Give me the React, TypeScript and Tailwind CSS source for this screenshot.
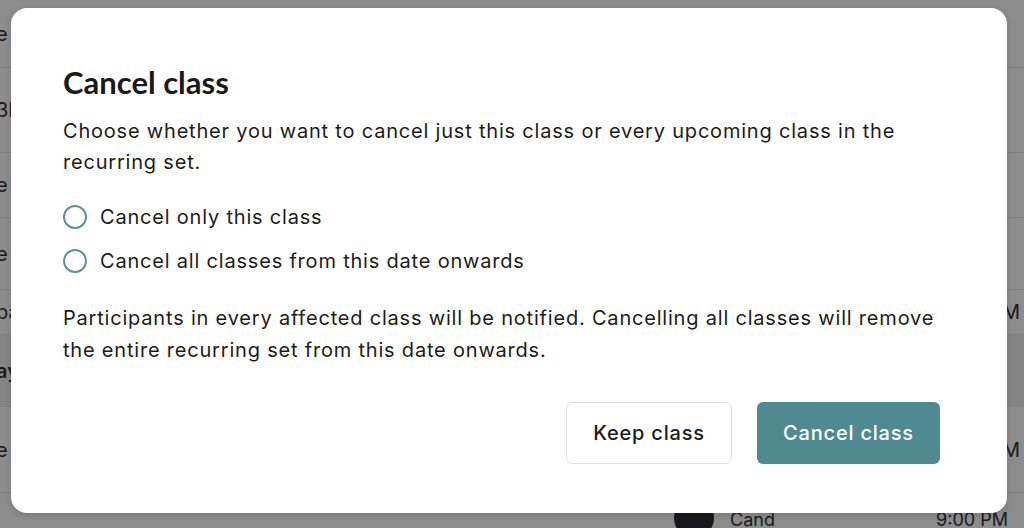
import { useState } from "react";

const rows = [
  { h: "h-[68px]", left: "e", right: "", band: false },
  { h: "h-[85px]", left: "3M", right: "", band: false },
  { h: "h-[65px]", left: "e", right: "", band: false },
  { h: "h-[72px]", left: "e", right: "", band: false },
  { h: "h-[45px]", left: "pa", right: "M", band: false },
  { h: "h-[72px]", left: "ay", right: "", band: true },
  { h: "h-[86px]", left: "e", right: "M", band: false },
];

export default function App() {
  const [choice, setChoice] = useState<string | null>(null);

  return (
    <div className="relative h-[528px] w-[1024px] overflow-hidden bg-white font-['Inter',sans-serif] text-[#1c1c1c]">
      {/* Page behind the dialog */}
      <div className="flex flex-col">
        {rows.map((r, i) => (
          <div
            key={i}
            className={`${r.h} flex items-center justify-between border-b border-[#e8e8e8] text-[20px] ${r.band ? "bg-[#f2f2f2] font-semibold" : ""}`}
          >
            <span className="-ml-[4px] text-[#333]">{r.left}</span>
            <span className="mr-[4px] text-[#333]">{r.right}</span>
          </div>
        ))}
        <div className="flex h-[40px] items-start pl-[674px] pt-[5px]">
          <div className="h-[40px] w-[40px] rounded-full bg-[#2d2d33]" />
          <span className="ml-4 mt-2 text-[18px] text-[#333]">Cand</span>
          <span className="ml-auto mr-4 mt-2 text-[18px] text-[#333]">9:00 PM</span>
        </div>
      </div>

      {/* Overlay */}
      <div className="absolute inset-0 bg-black/45" />

      {/* Dialog */}
      <div className="absolute left-[11px] top-[8px] flex h-[505px] w-[996px] flex-col rounded-[16px] bg-white pl-[52px] pr-[67px] pt-[62px] tracking-[0.8px] shadow-[0_2px_6px_rgba(0,0,0,0.15)]">
        <h2 className="font-['Lato',sans-serif] text-[31px] font-bold leading-[24px] tracking-[0px] text-[#1a1a1a]">
          Cancel class
        </h2>
        <p className="mt-[22px] text-[20px] leading-[31px]">
          Choose whether you want to cancel just this class or every upcoming class in the recurring set.
        </p>

        <div className="mt-[26px] flex flex-col gap-[18px]">
          {[
            { id: "one", label: "Cancel only this class" },
            { id: "all", label: "Cancel all classes from this date onwards" },
          ].map((o) => (
            <label key={o.id} className="flex cursor-pointer items-center gap-[13px] text-[20px] leading-[26px]">
              <span
                onClick={() => setChoice(o.id)}
                className="flex h-[24px] w-[24px] items-center justify-center rounded-full border-2 border-[#5b9497]"
              >
                {choice === o.id && <span className="h-[12px] w-[12px] rounded-full bg-[#4e8b90]" />}
              </span>
              <span onClick={() => setChoice(o.id)}>{o.label}</span>
            </label>
          ))}
        </div>

        <p className="mt-[28px] text-[20px] leading-[32px]">
          Participants in every affected class will be notified. Cancelling all classes will remove the entire recurring set from this date onwards.
        </p>

        <div className="mt-[36px] flex justify-end gap-[25px]">
          <button className="h-[62px] w-[166px] rounded-[6px] border border-[#e2e2e2] bg-white text-[20px] font-medium text-[#1c1c1c]">
            Keep class
          </button>
          <button className="h-[62px] w-[183px] rounded-[6px] bg-[#4e8a8f] text-[20px] font-medium text-white">
            Cancel class
          </button>
        </div>
      </div>
    </div>
  );
}
